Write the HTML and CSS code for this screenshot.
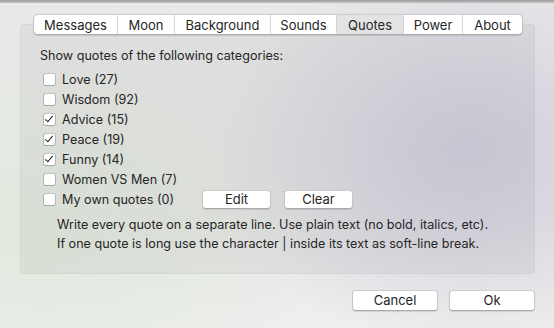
FILE: index.html
```html
<!DOCTYPE html>
<html>
<head>
<meta charset="utf-8">
<link rel="stylesheet" href="styles.css">
</head>
<body>
<div class="window">
  <div class="topband"></div>
  <div class="content">
    <div class="tabview">
      <div class="tabs">
        <div class="tab t1">Messages</div>
        <div class="tab t2">Moon</div>
        <div class="tab t3">Background</div>
        <div class="tab t4">Sounds</div>
        <div class="tab t5 selected">Quotes</div>
        <div class="tab t6">Power</div>
        <div class="tab t7">About</div>
      </div>
      <div class="box">
        <div class="heading">Show quotes of the following categories:</div>
        <div class="list">
          <label class="row"><span class="cb"></span>Love (27)</label>
          <label class="row"><span class="cb"></span>Wisdom (92)</label>
          <label class="row"><span class="cb on"></span>Advice (15)</label>
          <label class="row"><span class="cb on"></span>Peace (19)</label>
          <label class="row"><span class="cb on"></span>Funny (14)</label>
          <label class="row"><span class="cb"></span>Women VS Men (7)</label>
          <div class="row own">
            <label class="ownlabel"><span class="cb"></span>My own quotes (0)</label>
            <div class="btns">
              <div class="btn small">Edit</div>
              <div class="btn small">Clear</div>
            </div>
          </div>
        </div>
        <div class="note">
          <div>Write every quote on a separate line. Use plain text (no bold, italics, etc).</div>
          <div>If one quote is long use the character | inside its text as soft-line break.</div>
        </div>
      </div>
    </div>
    <div class="footer">
      <div class="btn big">Cancel</div>
      <div class="btn big">Ok</div>
    </div>
  </div>
</div>
</body>
</html>
```

FILE: styles.css
```css
* { box-sizing: border-box; }
html, body { margin: 0; padding: 0; }
body {
  width: 554px;
  height: 328px;
  overflow: hidden;
  font-family: Inter, "Liberation Sans", Arial, sans-serif;
  font-size: 12.6px;
  color: #262626;
}
.window {
  width: 554px;
  height: 328px;
  background:
    radial-gradient(ellipse 260px 200px at 470px 150px, rgba(205,203,218,0.9), rgba(205,203,218,0) 100%),
    radial-gradient(ellipse 300px 220px at 40px 230px, rgba(226,234,222,1), rgba(226,234,222,0) 100%),
    linear-gradient(180deg, #e9e9e9 0%, #e8e8e8 70%, #efefef 100%);
  display: flex;
  flex-direction: column;
}
.topband {
  height: 3px;
  background: linear-gradient(180deg, #9c9c9c, #c4c4c4);
}
.content {
  flex: 1;
  padding: 11px 19px 0 20px;
  display: flex;
  flex-direction: column;
}
.tabview {
  position: relative;
  display: flex;
  flex-direction: column;
}
.tabs {
  position: relative;
  z-index: 2;
  align-self: flex-start;
  margin-left: 13px;
  display: flex;
  height: 21px;
  background: #fff;
  border: 1px solid #c2c2c2;
  border-top-color: #cdcdcd;
  border-bottom-color: #adadad;
  border-radius: 5px;
  box-shadow: 0 0.5px 1px rgba(0,0,0,0.12);
  overflow: hidden;
  font-size: 13px;
}
.tab {
  display: flex;
  align-items: center;
  justify-content: center;
  height: 100%;
  border-left: 1px solid #d6d6d6;
  line-height: 1;
  padding-top: 1px;
}
.tab:first-child { border-left: none; }
.tab.selected { background: #e3e3e3; }
.t1 { width: 83px; }
.t2 { width: 57px; }
.t3 { width: 96px; }
.t4 { width: 66px; }
.t5 { width: 67px; }
.t6 { width: 59px; }
.t7 { width: 60px; }
.box {
  margin-top: -11px;
  height: 250px;
  background: rgba(0,0,0,0.045);
  border: 1px solid rgba(0,0,0,0.035);
  border-radius: 4px;
  padding: 22px 0 0 19px;
}
.heading { height: 17px; line-height: 17px; }
.list {
  margin-top: 5px;
  display: flex;
  flex-direction: column;
}
.row {
  display: flex;
  align-items: center;
  height: 20px;
  padding-left: 3px;
}
.row.own { padding-left: 0; }
.ownlabel {
  display: flex;
  align-items: center;
  padding-left: 3px;
  width: 162px;
}
.cb {
  width: 13px;
  height: 13px;
  margin-right: 6px;
  background: #fff;
  border: 1px solid #b5b5b5;
  border-top-color: #c2c2c2;
  border-bottom-color: #a5a5a5;
  border-radius: 3px;
  position: relative;
  flex: none;
}
.cb.on::after {
  content: "";
  position: absolute;
  left: 3px;
  top: 0px;
  width: 3px;
  height: 7px;
  border-right: 1.5px solid #222;
  border-bottom: 1.5px solid #222;
  transform: rotate(40deg);
}
.btns {
  display: flex;
  gap: 13px;
}
.btn {
  display: flex;
  align-items: center;
  justify-content: center;
  background: #fff;
  border: 1px solid #c6c6c6;
  border-top-color: #cfcfcf;
  border-bottom-color: #a9a9a9;
  border-radius: 4px;
  box-shadow: 0 0.5px 1px rgba(0,0,0,0.1);
  line-height: 1;
  font-size: 13px;
}
.btn.small { width: 69px; height: 19px; }
.note {
  margin-top: 6px;
  padding-left: 17px;
  line-height: 19px;
}
.footer {
  display: flex;
  justify-content: flex-end;
  gap: 11px;
  margin-top: 16px;
}
.btn.big { width: 86px; height: 21px; }
```
